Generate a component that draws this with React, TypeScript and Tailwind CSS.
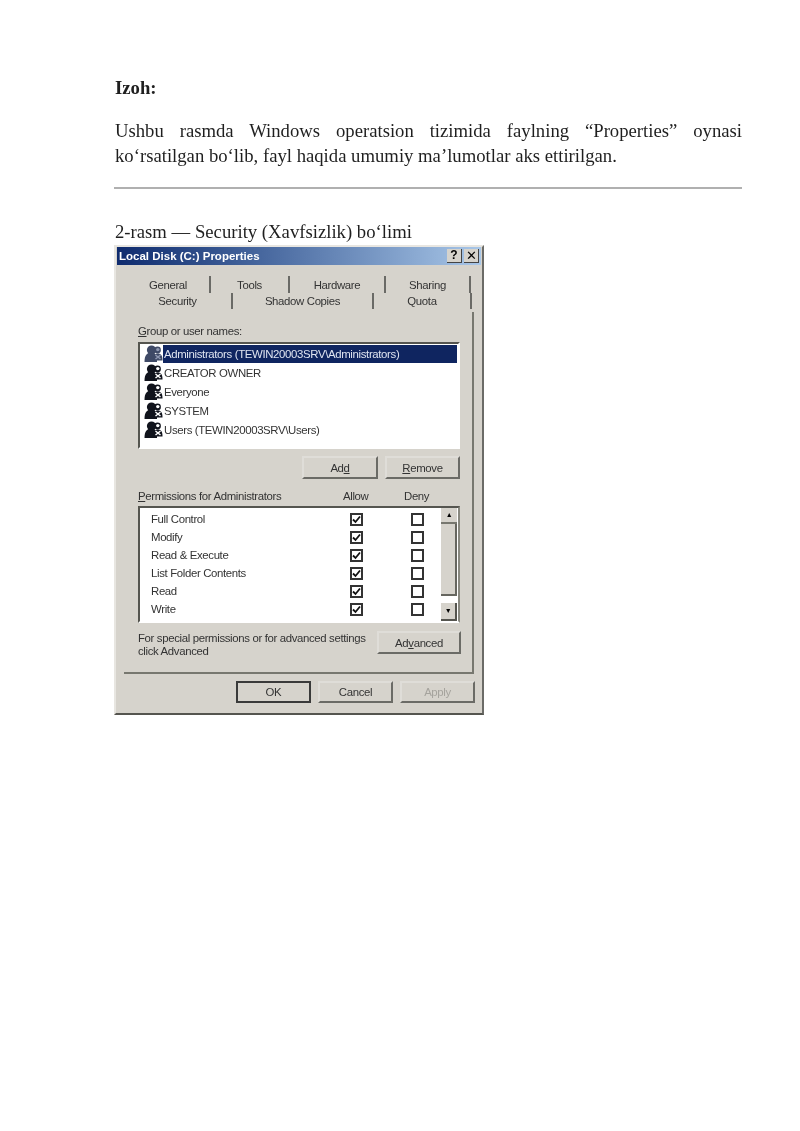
import React from "react";

function People({ light }: { light?: boolean }) {
  const c = light ? "#3f4a66" : "#10131c";
  const w = light ? "#8f98b2" : "#fff";
  return (
    <svg width="19" height="18" viewBox="0 0 19 18" className="shrink-0">
      <circle cx="7.5" cy="5" r="4.6" fill={c} />
      <path d="M0.5 17 C0.5 10 3 7.5 7.5 7.5 C12 7.5 13 11 13 17 Z" fill={c} />
      <circle cx="13.5" cy="5" r="3.4" fill={c} />
      <circle cx="13.8" cy="4.6" r="1.7" fill={w} />
      <path d="M9.5 15.5 C9.5 10.5 11 8.5 14 8.5 C17 8.5 18.5 10.5 18.5 15.5 Z" fill={c} />
      <path d="M11.5 10 L16.5 14 M16.5 10 L11.5 14" stroke={w} strokeWidth="1.5" />
    </svg>
  );
}

function Btn({ w, h, children, def, muted }: { w: string; h: string; children: React.ReactNode; def?: boolean; muted?: boolean }) {
  return (
    <div
      className={`${w} ${h} flex items-center justify-center bg-[#d6d3cc] border-2 ${
        def
          ? "border-[#3a3a3a]"
          : "border-t-[#dfddd8] border-l-[#dfddd8] border-r-[#6b6b66] border-b-[#6b6b66]"
      } ${muted ? "text-[#a5a39d]" : "text-[#333]"}`}
    >
      {children}
    </div>
  );
}

function Check({ on }: { on?: boolean }) {
  return (
    <div className="w-[13px] h-[13px] border-2 border-[#333] bg-white flex items-center justify-center">
      {on && (
        <svg width="9" height="9" viewBox="0 0 9 9">
          <path d="M1 4.5 L3.5 7 L8 1.5" fill="none" stroke="#111" strokeWidth="1.8" />
        </svg>
      )}
    </div>
  );
}

function Tab({ w, label, end }: { w: string; label: string; end?: boolean }) {
  return (
    <div className={`${w} flex items-center justify-center ${end ? "" : "border-r-2 border-[#6a6a66]"}`}>
      {label}
    </div>
  );
}

const users = [
  "Administrators (TEWIN20003SRV\\Administrators)",
  "CREATOR OWNER",
  "Everyone",
  "SYSTEM",
  "Users (TEWIN20003SRV\\Users)",
];
const perms = ["Full Control", "Modify", "Read & Execute", "List Folder Contents", "Read", "Write"];

export default function App() {
  return (
    <div className="w-[800px] h-[1131px] bg-white pt-[77px] pl-[115px] pr-[58px] text-[#1f1f1f] font-['Liberation_Serif',serif] text-[18.7px] leading-[25px]">
      <p className="font-bold leading-[22px] blur-[0.25px]">Izoh:</p>
      <p className="mt-[19px] text-justify blur-[0.25px]">
        Ushbu rasmda Windows operatsion tizimida faylning “Properties” oynasi ko‘rsatilgan bo‘lib, fayl haqida umumiy ma’lumotlar aks ettirilgan.
      </p>
      <div className="mt-[19px] -ml-px h-[2px] bg-[#b0b0b0]" />
      <p className="mt-[30px] blur-[0.25px]">2-rasm — Security (Xavfsizlik) bo‘limi</p>

      <div className="-ml-px mt-[1px] w-[370px] h-[470px] bg-[#d6d3cc] border-2 border-t-[#e8e6e1] border-l-[#e8e6e1] border-r-[#6b6b67] border-b-[#55554f] font-['Liberation_Sans',sans-serif] text-[11.4px] tracking-[-0.35px] leading-[14px] text-[#333] blur-[0.4px]">
        <div className="h-[18px] mx-[1px] flex items-center justify-between bg-gradient-to-r from-[#0f2b6e] to-[#a9c7e8] pl-[2px] pr-[2px] tracking-normal">
          <span className="text-white font-bold text-[11.5px]">Local Disk (C:) Properties</span>
          <div className="flex gap-[2px]">
            <div className="w-[15px] h-[14px] bg-[#d6d3cc] border-b border-r border-[#444] text-black font-bold text-[12px] leading-[13px] text-center">?</div>
            <div className="w-[15px] h-[14px] bg-[#d6d3cc] border-b border-r border-[#444] text-black text-[13px] leading-[13px] text-center">✕</div>
          </div>
        </div>

        <div className="mt-[11px] h-[17px] ml-[11px] flex">
          <Tab w="w-[84px]" label="General" />
          <Tab w="w-[79px]" label="Tools" />
          <Tab w="w-[96px]" label="Hardware" />
          <Tab w="w-[85px]" label="Sharing" />
        </div>
        <div className="h-[19px] pl-[8px] pb-[3px] flex">
          <Tab w="w-[109px]" label="Security" />
          <Tab w="w-[141px]" label="Shadow Copies" />
          <Tab w="w-[98px]" label="Quota" />
        </div>

        <div className="ml-[8px] w-[350px] h-[362px] border-r-2 border-b-2 border-r-[#77776f] border-b-[#77776f] px-[14px] pt-[12px]">
          <p className="h-[14px]"><span className="underline">G</span>roup or user names:</p>
          <div className="mt-[4px] w-[322px] h-[107px] bg-white border-2 border-t-[#55554f] border-l-[#55554f] border-r-white border-b-white pl-[4px] pr-[1px]">
            {users.map((u, i) => (
              <div key={u} className="h-[19px] flex items-center gap-0">
                <People light={i === 0} />
                <span className={`flex-1 h-[18px] flex items-center whitespace-nowrap pl-[1px] ${i === 0 ? "bg-[#0f2560] text-[#dfe4f0]" : ""}`}>{u}</span>
              </div>
            ))}
          </div>
          <div className="mt-[7px] w-[322px] flex justify-end gap-[7px]">
            <Btn w="w-[76px]" h="h-[23px]"><span>Ad<span className="underline">d</span></span></Btn>
            <Btn w="w-[75px]" h="h-[23px]"><span><span className="underline">R</span>emove</span></Btn>
          </div>
          <div className="mt-[10px] h-[14px] flex">
            <span className="w-[205px]"><span className="underline">P</span>ermissions for Administrators</span>
            <span className="w-[61px]">Allow</span>
            <span>Deny</span>
          </div>
          <div className="mt-[3px] w-[322px] h-[117px] bg-white border-2 border-t-[#55554f] border-l-[#55554f] border-r-[#88887f] border-b-white flex">
            <div className="flex-1 pt-[2px] pl-[11px]">
              {perms.map((p) => (
                <div key={p} className="h-[18px] flex items-center">
                  <span className="w-[199px] whitespace-nowrap">{p}</span>
                  <div className="w-[61px]"><Check on /></div>
                  <Check />
                </div>
              ))}
            </div>
            <div className="w-[16px] mr-[1px] flex flex-col">
              <div className="h-[16px] bg-[#d6d3cc] border-b-2 border-[#77776f] flex items-center justify-center text-black text-[7px]">▲</div>
              <div className="h-[72px] bg-[#d6d3cc] border-b-2 border-r-2 border-[#66665f]" />
              <div className="flex-1 bg-white" />
              <div className="h-[18px] bg-[#d6d3cc] border-b-2 border-r-2 border-[#55554f] flex items-center justify-center text-black text-[7px]">▼</div>
            </div>
          </div>
          <div className="mt-[8px] w-[323px] h-[28px] flex items-start justify-between">
            <p className="leading-[13px] mt-[1px] whitespace-nowrap">For special permissions or for advanced settings<br />click Advanced</p>
            <Btn w="w-[84px]" h="h-[23px]"><span>Ad<span className="underline">v</span>anced</span></Btn>
          </div>
        </div>

        <div className="mt-[7px] ml-[120px] flex gap-[7px]">
          <Btn w="w-[75px]" h="h-[22px]" def>OK</Btn>
          <Btn w="w-[75px]" h="h-[22px]">Cancel</Btn>
          <Btn w="w-[75px]" h="h-[22px]" muted>Apply</Btn>
        </div>
      </div>
    </div>
  );
}
